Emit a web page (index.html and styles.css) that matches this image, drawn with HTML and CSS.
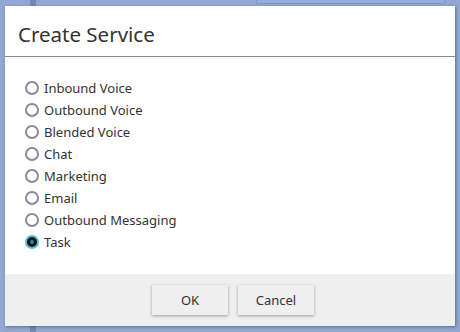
FILE: index.html
```html
<!DOCTYPE html>
<html lang="en">
<head>
    <meta charset="UTF-8">
    <title>Create Service</title>
    <link rel="stylesheet" href="styles.css">
</head>
<body>
    <div class="backdrop">
        <div class="bg-strip"></div>
        <div class="bg-box"></div>
    </div>
    <div class="dialog">
        <div class="dialog-header">
            <h2>Create Service</h2>
        </div>
        <div class="dialog-body">
            <label class="option"><input type="radio" name="service"><span class="dot"></span>Inbound Voice</label>
            <label class="option"><input type="radio" name="service"><span class="dot"></span>Outbound Voice</label>
            <label class="option"><input type="radio" name="service"><span class="dot"></span>Blended Voice</label>
            <label class="option"><input type="radio" name="service"><span class="dot"></span>Chat</label>
            <label class="option"><input type="radio" name="service"><span class="dot"></span>Marketing</label>
            <label class="option"><input type="radio" name="service"><span class="dot"></span>Email</label>
            <label class="option"><input type="radio" name="service"><span class="dot"></span>Outbound Messaging</label>
            <label class="option"><input type="radio" name="service" checked><span class="dot"></span>Task</label>
        </div>
        <div class="dialog-footer">
            <button>OK</button>
            <button>Cancel</button>
        </div>
    </div>
</body>
</html>
```

FILE: styles.css
```css
body {
    margin: 0;
    padding: 6px 5px;
    background-color: #92a8d2;
    font-family: "Noto Sans", "Open Sans", sans-serif;
    height: 332px;
    box-sizing: border-box;
    overflow: hidden;
}
.backdrop {
    position: absolute;
    inset: 0;
}
.bg-strip {
    position: absolute;
    left: 30px;
    top: 0;
    width: 6px;
    height: 332px;
    background-color: #7189b8;
}
.bg-box {
    position: absolute;
    left: 256px;
    top: -4px;
    width: 187px;
    height: 6px;
    border: 1px solid #7f97c6;
    background-color: #98addb;
}
.dialog {
    position: relative;
    width: 450px;
    height: 320px;
    background-color: #fff;
    box-shadow: 1px 1px 3px rgba(40, 50, 80, 0.5);
    display: flex;
    flex-direction: column;
}
.dialog-header {
    height: 51px;
    border-bottom: 1px solid #8c8c8c;
    padding: 5px 0 0 13px;
    box-sizing: border-box;
    display: flex;
    align-items: center;
}
.dialog-header h2 {
    margin: 0;
    font-size: 20.5px;
    font-weight: normal;
    color: #333;
}
.dialog-body {
    flex: 1;
    padding: 20px 0 0 20px;
}
.option {
    display: flex;
    align-items: center;
    height: 22px;
    font-size: 13px;
    color: #333;
}
.option input {
    display: none;
}
.dot {
    width: 10px;
    height: 10px;
    border: 2px solid #8a8a9c;
    border-radius: 50%;
    margin-right: 5px;
    box-sizing: content-box;
}
.option input:checked + .dot {
    width: 4px;
    height: 4px;
    border: 3px solid #111;
    background-color: #2a8c9c;
    box-shadow: 0 0 0 2px #56c3d4;
    margin-left: 2px;
    margin-right: 7px;
}
.dialog-footer {
    height: 52px;
    background-color: #efefef;
    display: flex;
    justify-content: center;
    align-items: flex-start;
    gap: 10px;
    padding: 11px 0 0 6px;
    box-sizing: border-box;
}
button {
    width: 76px;
    height: 30px;
    background-color: #efefef;
    border: none;
    box-shadow: 0 1px 3px rgba(0, 0, 0, 0.35);
    font-family: "Noto Sans", "Open Sans", sans-serif;
    font-size: 13px;
    color: #333;
    cursor: pointer;
}
```
